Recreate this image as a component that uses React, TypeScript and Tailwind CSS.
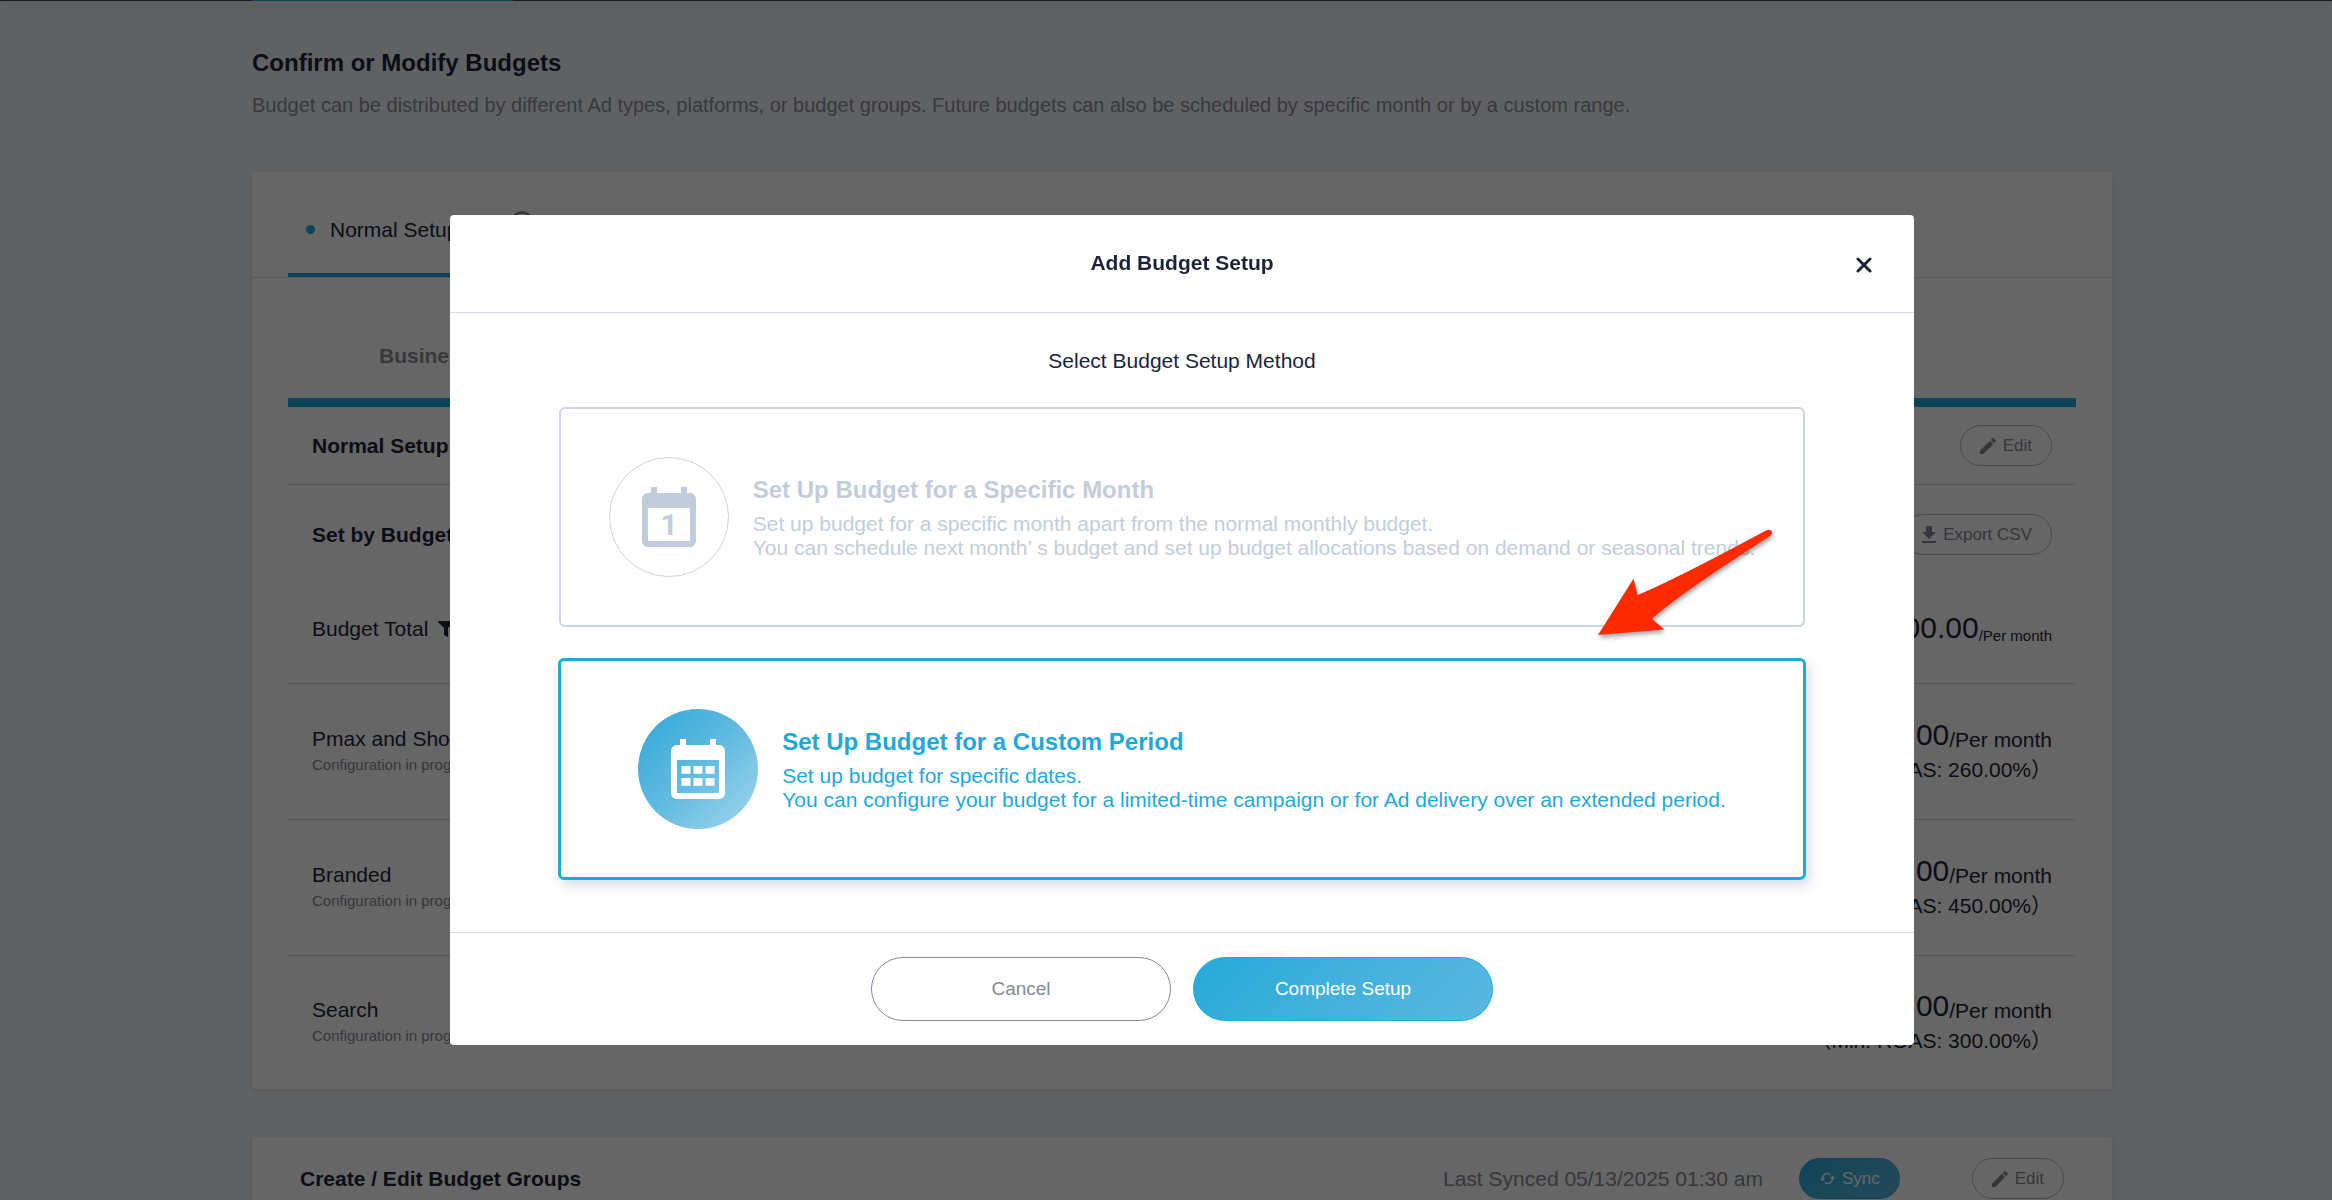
import type { ReactNode } from 'react';
import { FaFilter } from 'react-icons/fa';
import { MdCached, MdHelpOutline } from 'react-icons/md';

type BudgetRow = {
  name: string;
  note: string;
  amount: string;
  roas: string;
};

const BUDGET_ROWS: Array<BudgetRow> = [
  { name: 'Pmax and Shopping', note: 'Configuration in progress', amount: '00.00', roas: '260.00%' },
  { name: 'Branded', note: 'Configuration in progress', amount: '00.00', roas: '450.00%' },
  { name: 'Search', note: 'Configuration in progress', amount: '00.00', roas: '300.00%' },
];

const CALENDAR_PATH =
  'M19 4h-1V2h-2v2H8V2H6v2H5c-1.1 0-2 .9-2 2v14c0 1.1.9 2 2 2h14c1.1 0 2-.9 2-2V6c0-1.1-.9-2-2-2zm0 16H5V9h14v11z';

function PillButton({ icon, children }: { icon: ReactNode; children: ReactNode }) {
  return (
    <button
      type="button"
      className="flex h-[41px] items-center gap-[7px] rounded-full border border-[#b5bac6] px-[19px] text-[17px] text-[#858a98]"
    >
      {icon}
      {children}
    </button>
  );
}

function PencilIcon() {
  return (
    <svg viewBox="3 3 18 18" className="size-4" fill="currentColor" aria-hidden="true">
      <path d="M3 17.250V21h3.750L17.810 9.940l-3.750-3.750L3 17.250zM20.710 7.040c.39-.39.39-1.020 0-1.410l-2.340-2.340c-.39-.39-1.020-.39-1.410 0l-1.830 1.830 3.750 3.750 1.830-1.830z" />
    </svg>
  );
}

function DownloadIcon() {
  return (
    <svg viewBox="5 3 14 17" className="h-[17px] w-[14px]" fill="currentColor" aria-hidden="true">
      <path d="M19 9h-4V3H9v6H5l7 7 7-7zM5 18v2h14v-2H5z" />
    </svg>
  );
}

function MonthIcon() {
  return (
    <svg viewBox="0 0 24 24" className="size-[72px] font-['Roboto',sans-serif]" fill="currentColor" aria-hidden="true">
      <path d={CALENDAR_PATH} />
      <text x="12" y="18" textAnchor="middle" fontSize="10" fontWeight="700">
        1
      </text>
    </svg>
  );
}

function PeriodIcon() {
  return (
    <svg viewBox="0 0 24 24" className="size-[72px]" fill="currentColor" aria-hidden="true">
      <path d={CALENDAR_PATH} />
      <path d="M6.5 11h3v2.6h-3zM10.5 11h3v2.6h-3zM14.5 11h3v2.6h-3zM6.5 15h3v2.6h-3zM10.5 15h3v2.6h-3zM14.5 15h3v2.6h-3z" />
    </svg>
  );
}

function BudgetsCard() {
  return (
    <section className="mt-[55px] rounded bg-white shadow-[0_2px_6px_rgba(30,40,70,0.15)]">
      <div className="flex border-b border-[#d5dae5] pl-9">
        <button
          type="button"
          className="flex h-[105px] w-[200px] items-center gap-[15px] border-b-4 border-[#1fa9d8] pt-[14px] pl-[18px] whitespace-nowrap"
        >
          <span className="size-[9px] rounded-full bg-[#1fa9d8]" />
          Normal Setup
        </button>
        <button type="button" aria-label="Help" className="ml-[20px] h-[105px] pb-1 text-[#858a98]">
          <MdHelpOutline className="size-7" />
        </button>
      </div>

      <div className="px-9">
        <div className="flex border-b-[9px] border-[#1fa9d8] pl-[91px]">
          <button type="button" className="h-[120px] pt-[36px] font-bold text-[#8b8e99]">
            Business
          </button>
        </div>

        <div className="flex h-[78px] items-center justify-between border-b border-[#d5dae5] px-6">
          <h2 className="font-bold">Normal Setup</h2>
          <PillButton icon={<PencilIcon />}>Edit</PillButton>
        </div>

        <div className="flex h-[91px] items-center justify-between px-6 pt-2">
          <h3 className="font-bold">Set by Budget Group</h3>
          <PillButton icon={<DownloadIcon />}>Export CSV</PillButton>
        </div>

        <table className="w-full">
          <tbody>
            <tr className="h-[107px] border-b border-[#d5dae5]">
              <td className="px-6">
                <span className="flex items-center gap-[10px]">
                  Budget Total
                  <FaFilter className="size-4" />
                </span>
              </td>
              <td className="px-6 pb-0.5">
                <span className="flex items-end justify-end leading-none">
                  <span className="text-[30px]">00.00</span>
                  <span className="text-[15px]">/Per month</span>
                </span>
              </td>
            </tr>
            {BUDGET_ROWS.map((row) => (
              <tr key={row.name} className="h-[136px] border-b border-[#d5dae5] last:h-[134px] last:border-b-0">
                <td className="px-6">
                  <p>{row.name}</p>
                  <p className="mt-1 text-[15px] leading-5 text-[#858a98]">{row.note}</p>
                </td>
                <td className="px-6">
                  <p className="flex items-end justify-end leading-none">
                    <span className="text-[30px]">{row.amount}</span>
                    <span>/Per month</span>
                  </p>
                  <p className="mt-2 text-right">（Min. ROAS: {row.roas}）</p>
                </td>
              </tr>
            ))}
          </tbody>
        </table>
      </div>
    </section>
  );
}

function BudgetGroupsCard() {
  return (
    <section className="mt-12 h-[200px] rounded bg-white px-12 pt-[21px] shadow-[0_2px_6px_rgba(30,40,70,0.15)]">
      <div className="flex items-center">
        <h2 className="font-bold">Create / Edit Budget Groups</h2>
        <p className="mr-9 ml-auto text-[#858a98]">Last Synced 05/13/2025 01:30 am</p>
        <button
          type="button"
          className="mr-[72px] flex h-[41px] items-center gap-[6px] rounded-full border border-[#1fa9d8] bg-linear-135 from-[#22aad8] to-[#5ab8e0] px-[19px] text-[17px] text-white"
        >
          <MdCached className="size-[17px]" />
          Sync
        </button>
        <PillButton icon={<PencilIcon />}>Edit</PillButton>
      </div>
    </section>
  );
}

function PointerArrow() {
  return (
    <svg
      viewBox="0 0 190 125"
      className="pointer-events-none absolute top-[305px] right-[134px] h-[125px] w-[190px] drop-shadow-[1px_3px_2px_rgba(0,0,0,0.35)]"
      fill="#ff2a00"
      aria-hidden="true"
    >
      <path d="M8 115 L43.5 58.7 L47.5 75 Q82 61 176.500 10.200 Q180.500 9 182 12 Q182.500 14.200 180 16 Q88 75 62 98.700 L74.300 109.500 Z" />
    </svg>
  );
}

function BudgetSetupDialog() {
  return (
    <div
      role="dialog"
      aria-modal="true"
      aria-labelledby="dialog-title"
      className="relative w-full max-w-[1464px] rounded bg-white"
    >
      <header className="relative flex h-[98px] items-center justify-center border-b border-[#d5dce8] pb-0.5">
        <h2 id="dialog-title" className="font-bold">
          Add Budget Setup
        </h2>
        <button type="button" aria-label="Close" className="absolute right-[42px]">
          <svg viewBox="0 0 16 16" className="mt-1 size-4" stroke="currentColor" strokeWidth="3" strokeLinecap="round">
            <path d="M2 2l12 12M14 2L2 14" />
          </svg>
        </button>
      </header>

      <div className="px-[108px] pt-9 pb-[52px]">
        <p className="text-center">Select Budget Setup Method</p>

        <div className="mt-[34px] px-px">
          <button
            type="button"
            className="flex h-[220px] w-full items-center justify-center gap-6 rounded-md border-2 border-[#ccd5e1] text-left text-[#c2cddb]"
          >
            <span className="flex size-[120px] shrink-0 items-center justify-center rounded-full border border-[#c9d2de]">
              <MonthIcon />
            </span>
            <span className="pt-0.5">
              <span className="block text-2xl leading-7 font-bold">Set Up Budget for a Specific Month</span>
              <span className="mt-2 block">
                Set up budget for a specific month apart from the normal monthly budget.
                <br />
                You can schedule next month’ s budget and set up budget allocations based on demand or seasonal trends.
              </span>
            </span>
          </button>
        </div>

        <button
          type="button"
          className="mt-[31px] flex h-[222px] w-full items-center justify-center gap-6 rounded-md border-3 border-[#1fa9d8] text-left text-[#1fa9d8] shadow-[4px_6px_12px_rgba(80,100,150,0.22)]"
        >
          <span className="flex size-[120px] shrink-0 items-center justify-center rounded-full bg-linear-135 from-[#22a6d6] via-[#62bbe0] to-[#a0d6ec] text-white">
            <PeriodIcon />
          </span>
          <span className="pt-0.5">
            <span className="block text-2xl leading-7 font-bold">Set Up Budget for a Custom Period</span>
            <span className="mt-2 block">
              Set up budget for specific dates.
              <br />
              You can configure your budget for a limited-time campaign or for Ad delivery over an extended period.
            </span>
          </span>
        </button>
      </div>

      <footer className="flex justify-center gap-[22px] border-t border-[#d5dce8] py-6 text-[19px]">
        <button type="button" className="h-16 w-[300px] rounded-full border border-[#858a98] text-[#858a98]">
          Cancel
        </button>
        <button
          type="button"
          className="h-16 w-[300px] rounded-full border border-[#1fa9d8] bg-linear-135 from-[#22aad8] to-[#5ab8e0] text-white"
        >
          Complete Setup
        </button>
      </footer>

      <PointerArrow />
    </div>
  );
}

export default function App() {
  return (
    <div className="h-screen overflow-hidden bg-[#f0f3f7] font-['Liberation_Sans','Noto_Sans_CJK_JP',sans-serif] text-[21px] leading-6 text-[#1c2438]">
      <div className="h-px bg-[#3a3d55] pl-8 shadow-[0_2px_12px_rgba(0,0,0,0.5)]">
        <div className="mx-auto h-px max-w-[1860px]">
          <div className="h-px w-[261px] bg-[#1fa9d8]" />
        </div>
      </div>

      <div className="pl-8">
        <main className="mx-auto max-w-[1860px] pt-[46px]">
          <h1 className="text-2xl leading-8 font-bold">Confirm or Modify Budgets</h1>
          <p className="mt-[14px] text-xl leading-6 text-[#8b8e99]">
            Budget can be distributed by different Ad types, platforms, or budget groups. Future budgets can also be
            scheduled by specific month or by a custom range.
          </p>
          <BudgetsCard />
          <BudgetGroupsCard />
        </main>
      </div>

      <div className="fixed inset-0 flex items-start justify-center bg-black/60 pt-[215px] pl-8">
        <BudgetSetupDialog />
      </div>
    </div>
  );
}
